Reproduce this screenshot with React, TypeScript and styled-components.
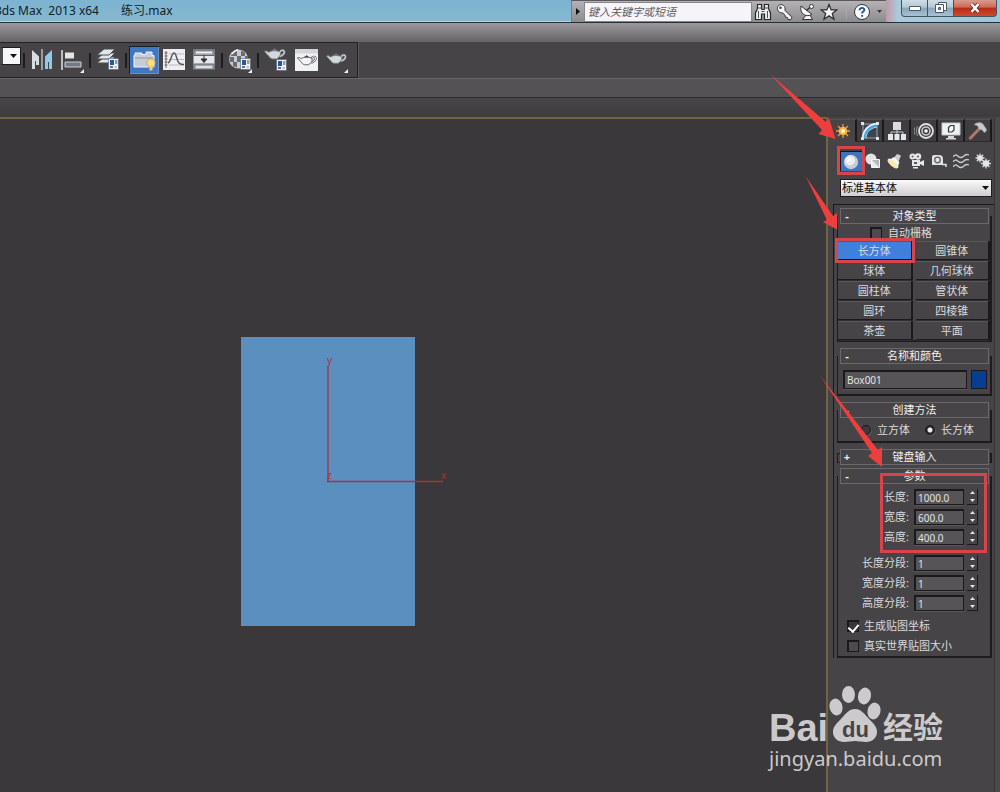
import React, { useState } from "react";
import styled, { createGlobalStyle, css } from "styled-components";

const GlobalStyle = createGlobalStyle`
  * { box-sizing: border-box; }
  html, body { margin: 0; background: #464446; }
  body {
    font-family: "Noto Sans", "Noto Sans CJK SC", sans-serif;
    font-size: 11px;
    line-height: 14px;
    color: #dcdadc;
  }
  button, input, select { font: inherit; color: inherit; margin: 0; padding: 0; border: 0; }
  svg { display: block; flex: none; }
`;

const Page = styled.div`
  display: flex;
  flex-direction: column;
  min-height: 100vh;
  overflow: hidden;
`;

/* ---------- title bar ---------- */

const TitleBar = styled.header`
  display: flex;
  height: 23px;
  background: linear-gradient(#7db3d1, #86b9cf);
  border-bottom: 1px solid #22303a;
  box-shadow: inset 0 -1px 0 #b5d5e2;
`;

const Title = styled.h1`
  flex: 1;
  display: flex;
  gap: 22px;
  margin: 0 0 0 -5px;
  font-size: 12px;
  line-height: 22px;
  font-weight: 400;
  color: #10202a;
  white-space: pre;
`;

const InfoCenter = styled.div`
  display: flex;
  align-items: center;
  height: 22px;
  background: linear-gradient(#b4b2b4, #8d8b8e);
  border-top: 1px solid #5b595b;
  border-left: 1px solid #6d7f8a;
`;

const SearchBox = styled.input`
  width: 168px;
  height: 20px;
  padding-left: 3px;
  background: #f6f4f8;
  border: 1px solid #88868a;
  font-style: italic;
  color: #333;
  &::placeholder { color: #5d5b5f; opacity: 1; }
`;

const InfoButton = styled.button<{ $w?: number }>`
  display: grid;
  place-items: center;
  width: ${(p) => p.$w ?? 22}px;
  height: 20px;
  background: none;
`;

const InfoDivider = styled.span`
  width: 1px;
  height: 14px;
  margin: 0 4px 0 6px;
  background: #aaa8ab;
`;

const WindowButtons = styled.div`
  display: flex;
  height: 22px;
  padding: 0 3px 0 15px;
  background: linear-gradient(90deg, #c39aa6 0, #a9cbdc 12px, #9cc6da 100%);
`;

const WindowButton = styled.button<{ $close?: boolean }>`
  display: grid;
  place-items: center;
  width: ${(p) => (p.$close ? 44 : 27)}px;
  height: 17px;
  border: 1px solid #43535f;
  border-top: 0;
  margin-right: ${(p) => (p.$close ? 0 : -1)}px;
  background: ${(p) =>
    p.$close
      ? "linear-gradient(#d99a8e 0, #cf6a58 45%, #b82a16 50%, #cf4a30 100%)"
      : "linear-gradient(#cfdde6 0, #b4c8d6 45%, #8ba6ba 50%, #a6c2d2 100%)"};
  &:first-child { border-bottom-left-radius: 4px; }
  &:last-child { border-bottom-right-radius: 4px; }
`;

/* ---------- main toolbar ---------- */

const MenuStrip = styled.div`
  height: 19px;
  background: linear-gradient(#9b999c, #656366);
`;

const ToolBar = styled.div`
  display: flex;
  height: 36px;
  background: #464446;
`;

const ToolGroup = styled.div`
  display: flex;
  align-items: center;
  padding-right: 6px;
  border: 1px solid #232123;
  border-left: 0;
  box-shadow: 1px 0 0 #59575a;
`;

const ComboEnd = styled.button`
  align-self: flex-start;
  display: flex;
  align-items: center;
  justify-content: flex-end;
  width: 21px;
  height: 18px;
  margin-top: 4px;
  padding-right: 3px;
  border: 1px solid #1d1b1d;
  border-left: 3px solid #4c4a4d;
  background: #f6f5f7;
`;

const ToolDivider = styled.span`
  width: 2px;
  height: 15px;
  margin: 0 2px;
  background: #1d1b1d;
`;

const ToolButton = styled.button<{ $active?: boolean }>`
  position: relative;
  display: grid;
  place-items: center;
  width: 30px;
  height: 28px;
  background: ${(p) => (p.$active ? "#3f77c2" : "none")};
  ${(p) => p.$active && css`box-shadow: inset 1px 1px 0 #16202c, inset -1px -1px 0 #6c92c4;`}
`;

const FlyoutMark = styled.span`
  position: absolute;
  right: 3px;
  bottom: 1px;
  border: 2px solid transparent;
  border-right-color: #f2f0f2;
  border-bottom-color: #f2f0f2;
`;

const RibbonStrip = styled.div`
  height: 19px;
  border-top: 1px solid #69676a;
  background: #545255;
`;

const DockStrip = styled.div`
  height: 20px;
  border-top: 1px solid #2c2a2c;
  background: linear-gradient(#484648, #3d3b3e);
`;

/* ---------- workspace ---------- */

const Workspace = styled.main`
  flex: 1;
  display: grid;
  grid-template-columns: minmax(0, 1fr) 172px;
`;

const Viewport = styled.section`
  position: relative;
  min-height: 560px;
  background: #3a383a;
  border: 2px solid #706541;
  border-left: 0;
  border-bottom: 0;
`;

const Scene = styled.svg`
  position: absolute;
  left: 240px;
  top: 217px;
`;

const AxisText = styled.text`
  font-size: 10px;
  fill: #a8323f;
`;

const Panel = styled.aside`
  position: relative;
  padding: 2px 7px 100px 2px;
  background: linear-gradient(90deg, #464446 166px, #363436 166px, #363436 167px, #4b494c 167px);
`;

const TabRow = styled.nav`
  display: flex;
  height: 23px;
`;

const PanelTab = styled.button<{ $active?: boolean }>`
  display: grid;
  place-items: center;
  width: 27px;
  border-right: 2px solid #1b191b;
  border-top: 1px solid #545255;
  border-bottom: 1px solid ${(p) => (p.$active ? "#464446" : "#2b292b")};
  background: ${(p) => (p.$active ? "#464446" : "#3f3d3f")};
`;

const CategoryRow = styled.div`
  display: flex;
  margin: 9px 0 8px 10px;
`;

const CategoryButton = styled.button<{ $active?: boolean }>`
  display: grid;
  place-items: center;
  flex: none;
  width: 22px;
  height: 20px;
  background: ${(p) => (p.$active ? "#3e73bf" : "none")};
  ${(p) => p.$active && css`box-shadow: inset 1px 1px 0 #15151b;`}
`;

const SelectWrap = styled.label`
  position: relative;
  display: block;
  width: 152px;
  margin-left: 10px;
  & > svg { position: absolute; right: 3px; top: 7px; pointer-events: none; }
`;

const KindSelect = styled.select`
  display: block;
  appearance: none;
  width: 100%;
  height: 18px;
  padding-left: 1px;
  border: 1px solid #1d1b1d;
  background: linear-gradient(#fafafa, #cfcdd0);
  color: #0d0b0d;
`;

const Rollouts = styled.div`
  display: flex;
  flex-direction: column;
  gap: 6px;
  width: 161px;
  margin: 7px 0 0 3px;
  padding: 3px 3px 0 3px;
  border-top: 1px solid #1b191b;
  border-left: 1px solid #1b191b;
`;

const RolloutBox = styled.section<{ $tight?: boolean }>`
  margin-bottom: ${(p) => (p.$tight ? -4 : 0)}px;
`;

const RolloutHeader = styled.button`
  position: relative;
  display: grid;
  grid-template-columns: 12px 1fr 12px;
  align-items: center;
  width: 149px;
  height: 16px;
  margin-left: 3px;
  border: 1px solid #6b696c;
  background: #464446;
  color: #f0eef0;
  & > b { line-height: 12px; }
`;

const RolloutBody = styled.div<{ $pad: string; $closed?: boolean }>`
  width: 155px;
  margin-top: ${(p) => (p.$closed ? -12 : -8)}px;
  margin-bottom: ${(p) => (p.$closed ? 3 : 0)}px;
  padding: ${(p) => p.$pad};
  border: 2px solid #1d1b1d;
  border-left-width: 1px;
  border-top-width: ${(p) => (p.$closed ? 1 : 0)}px;
  border-bottom-width: ${(p) => (p.$closed ? 1 : 2)}px;
`;

const CheckLabel = styled.label<{ $center?: boolean }>`
  display: flex;
  align-items: center;
  gap: 5px;
  height: 20px;
  ${(p) => p.$center && css`height: 16px; margin-left: 32px; gap: 6px;`}
`;

const CheckIndent = styled.div`
  padding-left: 9px;
`;

const Check = styled.input.attrs({ type: "checkbox" })`
  appearance: none;
  display: grid;
  place-items: center;
  width: 12px;
  height: 12px;
  border: 1px solid #1b191b;
  border-top-width: 2px;
  border-left-width: 2px;
  background: #4d4b4e;
  &:checked { background: #38363a; }
  &:checked::after {
    content: "";
    width: 5px;
    height: 8px;
    margin-bottom: 2px;
    border: solid #fff;
    border-width: 0 2px 2px 0;
    transform: rotate(40deg);
  }
`;

const ButtonGrid = styled.div`
  display: grid;
  grid-template-columns: 1fr 1fr;
  gap: 1px 3px;
`;

const ObjectButton = styled.button<{ $active?: boolean }>`
  height: 19px;
  line-height: 17px;
  border: solid #1b191b;
  border-width: 0 2px 1px 0;
  box-shadow: inset 0 1px 0 #5a585b, 0 1px 0 #302e30;
  background: ${(p) => (p.$active ? "#3f80dc" : "#464446")};
`;

const NameRow = styled.div`
  display: flex;
  gap: 4px;
`;

const Field = styled.input<{ $w: number }>`
  width: ${(p) => p.$w}px;
  height: ${(p) => (p.$w > 60 ? 19 : 16)}px;
  padding: 0 2px;
  border: solid #1b191b;
  border-width: 2px 1px 1px 2px;
  box-shadow: 0 1px 0 #5a585b;
  background: #565457;
  font-size: 10px;
  line-height: 12px;
  color: #e4e2e4;
`;

const Swatch = styled.button`
  width: 17px;
  height: 19px;
  border: 1px solid #1b191b;
  background: #063f92;
`;

const RadioRow = styled.div`
  display: flex;
  gap: 15px;
`;

const RadioLabel = styled.label`
  display: flex;
  align-items: center;
  gap: 6px;
`;

const Radio = styled.input.attrs({ type: "radio" })`
  appearance: none;
  width: 10px;
  height: 10px;
  border: 1px solid #1b191b;
  border-radius: 50%;
  background: #3c3a3d;
  box-shadow: 1px 1px 0 #5a585b;
  &:checked { background: radial-gradient(circle, #efedf0 2px, #2b292c 3px); }
`;

const SpinList = styled.div`
  display: grid;
  gap: 4px;
  margin-bottom: 10px;
  & + & { margin-bottom: 5px; }
`;

const SpinRow = styled.div`
  display: flex;
  align-items: center;
  justify-content: flex-end;
  height: 16px;
  gap: 3px;
  padding-right: 12px;
  & > label { padding-right: 2px; }
`;

const Spinner = styled.span`
  display: grid;
  width: 11px;
  height: 16px;
  border: solid #1b191b;
  border-width: 0 1px 1px 0;
  & > button { display: grid; place-items: center; background: none; }
`;

/* ---------- overlays ---------- */

const Annotations = styled.svg`
  position: absolute;
  left: -59px;
  top: -44px;
  pointer-events: none;
`;

const Watermark = styled.div`
  position: absolute;
  right: 53px;
  bottom: 22px;
  color: #d5d3d5;
  opacity: 0.94;
  pointer-events: none;
`;

const WatermarkUrl = styled.div`
  font-family: "Noto Sans", sans-serif;
  font-size: 20px;
  line-height: 22px;
  white-space: nowrap;
`;

const Logo = styled.svg`
  overflow: visible;
`;

const LogoText = styled.text<{ $size: number; $dark?: boolean }>`
  font-family: "Liberation Sans", "Noto Sans CJK SC", sans-serif;
  font-weight: 700;
  font-size: ${(p) => p.$size}px;
  fill: ${(p) => (p.$dark ? "#464446" : "#d5d3d5")};
`;

/* ---------- icons ---------- */

type DrawProps = { w?: number; h?: number; children: React.ReactNode };
const Draw = ({ w = 22, h = 22, children }: DrawProps) => (
  <svg width={w} height={h} viewBox={`0 0 ${w} ${h}`} fill="none" aria-hidden="true">
    {children}
  </svg>
);

const Caret = ({ fill = "#111" }: { fill?: string }) => (
  <Draw w={7} h={4}><path d="M0 0h7L3.5 4z" fill={fill} /></Draw>
);

const DialogBadge = ({ x, y }: { x: number; y: number }) => (
  <g transform={`translate(${x} ${y})`}>
    <path d="M0 0h10v11H0z" fill="#eef2f6" stroke="#55606c" strokeWidth=".6" />
    <path d="M1.500 1.500h4v5h-4z" fill="#1f5aa4" />
    <path d="M6.500 2.500h2.500M6.500 4.500h2.500" stroke="#445" />
    <path d="M1.500 8.500h3" stroke="#2a3a55" strokeWidth="1.400" />
    <path d="M6 8.500h2.500" stroke="#8a94a0" />
  </g>
);

const teapotPath =
  "M5 8c1.500-2.500 11-2.500 12.500 0 .3 1.500-.2 3-1.200 4.200-.8 1.200-1.800 2-2.800 2.600H8.500C6.500 14 5.500 12.800 5 11.500 3.500 11 2.500 8.500.5 6.800c1.800-.8 3.600-.2 4.500 1.200z";

const Teapot = ({ x = 0, y = 0, s = 1, fill = "#d3d8dd", line = "#777c82" }) => (
  <g transform={`translate(${x} ${y}) scale(${s})`}>
    <path d="M17 7.500c1-2.500 4.800-2.700 4.600.3-.2 2.300-2.600 3.700-5 4.500" stroke={line} strokeWidth="2.600" />
    <path d="M17 7.500c1-2.500 4.800-2.700 4.600.3-.2 2.300-2.600 3.700-5 4.500" stroke={fill} strokeWidth="1.200" />
    <path d={teapotPath} fill={fill} stroke={line} />
    <path d="M9.300 6c0-1.200 3.800-1.200 3.800 0M10.500 4.500h1.300" stroke={line} strokeWidth="1.500" />
  </g>
);

const MirrorIcon = () => (
  <Draw>
    <path d="M1 1l7 6.500V16l-3 0v-4l-1 0v8H1z" fill="#d7dde2" />
    <path d="M11 0v21" stroke="#e6f2f8" />
    <path d="M21 1l-7 6.500V20h3v-7h1v7h3z" fill="#8ecbe8" />
  </Draw>
);
const AlignIcon = () => (
  <Draw>
    <path d="M1 1v20" stroke="#e4e4ea" strokeWidth="1.500" />
    <path d="M4 3.500h9v6H4z" fill="#e2e4e8" />
    <path d="M4 13h16v5H4z" fill="#747986" stroke="#cbd0d8" />
  </Draw>
);
const LayersIcon = () => (
  <Draw>
    {[11, 7, 3].map((y) => (
      <path key={y} d={`M7 ${y - 3}h11l-6 6H0z`} fill="#e1e4e8" stroke="#4b4d51" />
    ))}
    <DialogBadge x={11.5} y={9.5} />
  </Draw>
);
const RibbonIcon = () => (
  <Draw w={24}>
    <path d="M2 6.500h1V4h7v1.500h4V3h6v3.500h2V18H2z" fill="#c7cdd6" stroke="#f1f3f6" />
    <path d="M3 9h18" stroke="#8b96a6" />
    <circle cx="19" cy="14" r="4.200" fill="#ffdc80" stroke="#b88a3a" strokeWidth=".6" />
    <path d="M17.500 18h3v3.500h-3z" fill="#eecb80" />
  </Draw>
);
const CurveIcon = () => (
  <Draw>
    <path d="M0 0h22v21H0z" fill="#eeeef2" />
    <path d="M6 5h15M6 10.500h15M6 16h15" stroke="#b7b7bf" />
    <path d="M3 2v17M1.500 4h3M1.500 7h3M1.500 10h3M1.500 13h3M1.500 16h3" stroke="#4a4a50" strokeWidth=".8" />
    <path d="M5 14C8 13 8.500 4 11 4s2.500 7 4.500 9.500 4 2 5.500 2" stroke="#55565c" strokeWidth="1.400" />
  </Draw>
);
const SchematicIcon = () => (
  <Draw>
    <path d="M.5.5h21v20H.5z" fill="#e6e8ec" />
    <path d="M1 1h20v5.500H1zM1 15h20v5.500H1z" fill="#a0a4aa" stroke="#62656b" />
    <path d="M3 3.500h16M3 18h16" stroke="#f5f5f5" strokeWidth="1.500" />
    <path d="M11 6v6M8 10l3 3.500 3-3.500z" stroke="#333" fill="#333" />
  </Draw>
);
const MaterialIcon = () => (
  <Draw w={24}>
    <circle cx="10.500" cy="10" r="9.500" fill="#c9cdd2" />
    <path d="M5 2h4v5H3zM13 1.500l4 2V7h-4zM1.500 8H6v5H2zM9 7h4v6H9zM17 7h3v5h-3zM5 13h4v5.500L5 17zM13 13h3v5h-3z" fill="#686c72" />
    <path d="M4 5q3-4 6-4" stroke="#fff" strokeWidth="1.500" />
    <DialogBadge x={12.500} y={9.5} />
  </Draw>
);
const RenderSetupIcon = () => (
  <Draw w={24} h={24}><Teapot y={-3} s={0.94} /><DialogBadge x={12.500} y={11.500} /></Draw>
);
const RenderFrameIcon = () => (
  <Draw w={23}>
    <path d="M0 0h23v22H0z" fill="#f1f1f4" />
    <path d="M0 0h23v4.500H0z" fill="#d3d5da" />
    <Teapot x={2} y={3} s={0.86} fill="#f2f4f6" line="#4b4d52" />
  </Draw>
);
const RenderIcon = () => <Draw w={24}><Teapot x={2} y={1} s={0.9} /></Draw>;

const BinocularsIcon = () => (
  <Draw w={18} h={18}>
    <path d="M3.500 1.500h4v4l.5 1h2l.5-1v-4h4v4l2 4.500v6.500h-6V11h-3v5.500h-6V10l2-4.500z" fill="#eceef0" stroke="#26282c" strokeWidth="1.200" />
    <path d="M4.500 8v7M13.500 8v7M3.500 5h4M10.500 5h4M7.500 8.500h3" stroke="#4f5359" />
  </Draw>
);
const KeyIcon = () => (
  <Draw w={18} h={18}>
    <path d="M8.800 7.300l7.200 6.900-1.300 2.600-2.700-.3-.6-2-2-.4-.4-1.900-2.300-2.400C4 10.500 1 8 1.500 4.500 2 2 5 .8 7.300 2.300 9.200 3.700 9.500 5.500 8.800 7.300z" fill="#f5f5f7" stroke="#333539" />
    <circle cx="4.500" cy="4.700" r="1.300" fill="#44464a" />
  </Draw>
);
const DishIcon = () => (
  <Draw w={18} h={18}>
    <path d="M9 11l-4.500 5.500h10L12 12z" fill="#f5f5f7" stroke="#333539" />
    <path d="M3 3c-1.500 7 4 12 11 8.500z" fill="#f5f5f7" stroke="#333539" />
    <path d="M8.500 7.500l4-3.500" stroke="#333539" strokeWidth="1.500" />
    <circle cx="13.500" cy="3.500" r="2" fill="#fff" stroke="#333539" />
  </Draw>
);
const StarIcon = () => (
  <Draw w={18} h={18}>
    <path d="M9 1.500l2.100 5.400H16.700l-4.400 3.500 1.700 5.800L9 12.900l-5 3.300 1.700-5.800L1.300 6.900h5.600z" fill="#f5f5f7" stroke="#2f3135" strokeWidth="1.300" />
  </Draw>
);
const HelpIcon = () => (
  <Draw w={18} h={18}>
    <circle cx="9" cy="9" r="7.500" fill="#f7f9fb" stroke="#34373c" />
    <path d="M6.600 7.300c0-3.300 5-3 4.700-.2-.2 1.500-2.200 1.600-2.200 3.300M9.100 12v1.800" stroke="#27548f" strokeWidth="1.900" />
  </Draw>
);

const CreateIcon = () => (
  <Draw w={16} h={16}>
    <path d="M8 1v14M1 8h14M3 3l10 10M13 3L3 13" stroke="#f09a35" strokeWidth="1.300" />
    <circle cx="8" cy="8" r="4.300" fill="#f9b040" />
    <circle cx="8" cy="8" r="2.200" fill="#fff3c0" />
  </Draw>
);
const ModifyIcon = () => (
  <Draw w={18} h={18}>
    <path d="M2 2h14v14H2z" fill="#3a4550" stroke="#9ea6ae" />
    <path d="M3 16C4 8 8 4 16 3" stroke="#e5f5fd" strokeWidth="4.500" />
    <path d="M3.500 16C4.500 9 8 4.500 16 3.500" stroke="#45a5dc" strokeWidth="2.500" />
    <path d="M0 0h3v3H0zM15 0h3v3h-3zM0 15h3v3H0zM15 15h3v3h-3z" fill="#dfe3e6" />
  </Draw>
);
const HierarchyIcon = () => (
  <Draw w={18} h={18}>
    <path d="M5 0h8v8H5z" fill="#d9dde1" />
    <path d="M9 7v5M3 13v-3h12v3" stroke="#c8ccd0" />
    <path d="M0 12h5v6H0zM6.500 12h5v6h-5zM13 12h5v6h-5z" fill="#e4e7ea" />
  </Draw>
);
const MotionIcon = () => (
  <Draw w={20} h={18}>
    <circle cx="12" cy="9" r="7" stroke="#dfe2e5" strokeWidth="1.800" />
    <circle cx="12" cy="9" r="4" stroke="#c3c8cd" strokeWidth="1.600" />
    <circle cx="12" cy="9" r="1.800" fill="#fff" />
    <path d="M3.500 4q-2.500 5 0 10M.8 5.500q-1.500 3.500 0 7" stroke="#8b9096" />
  </Draw>
);
const DisplayIcon = () => (
  <Draw w={20} h={18}>
    <path d="M1 1h18v12H1z" fill="#f0f2f4" stroke="#c4c8cc" />
    <path d="M7.500 5.500l2-2h3.500v4.500l-2 2H7.500z" stroke="#33363a" strokeWidth="1.200" />
    <path d="M7 14h6v2h2v1.500H5V16h2z" fill="#d5d8db" />
  </Draw>
);
const UtilitiesIcon = () => (
  <Draw w={20} h={18}>
    <path d="M12 6L1.500 17" stroke="#b0756c" strokeWidth="3" />
    <path d="M6 2.500c3-2.500 7-2.500 9-.5l4 6-2.500 3L14 8l-3-.5L9.500 4z" fill="#c6cace" stroke="#777c82" strokeWidth=".6" />
  </Draw>
);

const SphereIcon = () => (
  <Draw w={18} h={18}>
    <circle cx="9" cy="10" r="7.200" fill="#c8ccd1" />
    <circle cx="8" cy="8.500" r="5" fill="#eceef0" />
    <circle cx="7" cy="7.500" r="2" fill="#fff" />
  </Draw>
);
const ShapesIcon = () => (
  <Draw w={16} h={16}>
    <circle cx="6" cy="6" r="5.500" fill="#e0e2e5" />
    <path d="M6.500 6.500h8v8h-8z" fill="#b5b9be" stroke="#f4f5f6" />
    <path d="M7 14V7l7 7z" fill="#e9ebed" />
  </Draw>
);
const LightIcon = () => (
  <Draw w={16} h={16}>
    <path d="M14 2.500L10 1 6 6l5 4z" fill="#cdd0d4" />
    <path d="M7 4L2 7l8 8 2.500-5.500z" fill="#f4f5f6" />
    <ellipse cx="6" cy="10.500" rx="6" ry="2.300" transform="rotate(40 6 10.500)" fill="#ffe9a0" stroke="#f4f2e8" />
  </Draw>
);
const CameraIcon = () => (
  <Draw w={16} h={16}>
    <circle cx="3.500" cy="3.500" r="3" fill="#e5e8ea" /><circle cx="9" cy="3.500" r="3.200" fill="#e5e8ea" />
    <circle cx="3.500" cy="3.500" r="1" fill="#555" /><circle cx="9" cy="3.500" r="1" fill="#555" />
    <path d="M3 7h8v6H3zM11 9l4-2v6l-4-2zM4 14h5v1.500H4z" fill="#e5e8ea" />
    <path d="M5 9h3v2H5z" fill="#55585c" />
  </Draw>
);
const HelperIcon = () => (
  <Draw w={16} h={16}>
    <path d="M1 4q0-2 2-2h5q4 0 4 4v6H1z" fill="#e0e3e6" />
    <circle cx="6.500" cy="7" r="2.800" stroke="#5a5e63" strokeWidth="1.300" />
    <path d="M11 11.500h4V14" stroke="#e0e3e6" strokeWidth="1.500" />
  </Draw>
);
const WavesIcon = () => (
  <Draw w={16} h={16}>
    {[3, 8, 13].map((y) => (
      <path key={y} d={`M0 ${y + 1}q2-3.500 5-.8t5.500 0T16 ${y - 1}`} stroke="#c4c9ce" strokeWidth="1.300" />
    ))}
  </Draw>
);
const SystemsIcon = () => (
  <Draw w={16} h={16}>
    <path d="M5 .5v9M.5 5h9M1.800 1.800l6.400 6.400M8.200 1.800L1.800 8.200" stroke="#d3d6d9" strokeWidth="1.300" />
    <circle cx="5" cy="5" r="2.800" fill="#e3e5e8" />
    <path d="M11 5.500v10M6 10.500h10M7.500 7l7 7M14.500 7l-7 7" stroke="#d3d6d9" strokeWidth="1.300" />
    <circle cx="11" cy="10.500" r="3.200" fill="#e3e5e8" />
  </Draw>
);

/* ---------- data ---------- */

type Tool = { label: string; icon: React.ReactNode; active?: boolean; flyout?: boolean };
const toolGroups: Tool[][] = [
  [{ label: "镜像", icon: <MirrorIcon /> }, { label: "对齐", icon: <AlignIcon />, flyout: true }],
  [{ label: "层管理器", icon: <LayersIcon /> }],
  [
    { label: "功能区", icon: <RibbonIcon />, active: true },
    { label: "曲线编辑器", icon: <CurveIcon /> },
    { label: "图解视图", icon: <SchematicIcon /> },
  ],
  [{ label: "材质编辑器", icon: <MaterialIcon />, flyout: true }],
  [
    { label: "渲染设置", icon: <RenderSetupIcon /> },
    { label: "渲染帧窗口", icon: <RenderFrameIcon /> },
    { label: "渲染", icon: <RenderIcon />, flyout: true },
  ],
];

const panelTabs: Tool[] = [
  { label: "创建", icon: <CreateIcon />, active: true },
  { label: "修改", icon: <ModifyIcon /> },
  { label: "层次", icon: <HierarchyIcon /> },
  { label: "运动", icon: <MotionIcon /> },
  { label: "显示", icon: <DisplayIcon /> },
  { label: "工具", icon: <UtilitiesIcon /> },
];

const categories: Tool[] = [
  { label: "几何体", icon: <SphereIcon />, active: true },
  { label: "图形", icon: <ShapesIcon /> },
  { label: "灯光", icon: <LightIcon /> },
  { label: "摄影机", icon: <CameraIcon /> },
  { label: "辅助对象", icon: <HelperIcon /> },
  { label: "空间扭曲", icon: <WavesIcon /> },
  { label: "系统", icon: <SystemsIcon /> },
];

const objectTypes = ["长方体", "圆锥体", "球体", "几何球体", "圆柱体", "管状体", "圆环", "四棱锥", "茶壶", "平面"];
const sizes = [["长度:", "1000.0"], ["宽度:", "600.0"], ["高度:", "400.0"]];
const segments = [["长度分段:", "1"], ["宽度分段:", "1"], ["高度分段:", "1"]];

/* ---------- parts ---------- */

type RolloutProps = { title: string; pad?: string; closed?: boolean; children?: React.ReactNode };
const Rollout = ({ title, pad = "4px 0", closed, children }: RolloutProps) => (
  <RolloutBox $tight={closed}>
    <RolloutHeader aria-expanded={!closed}><b>{closed ? "+" : "-"}</b>{title}</RolloutHeader>
    <RolloutBody $pad={pad} $closed={closed}>{children}</RolloutBody>
  </RolloutBox>
);

const SpinField = ({ label, value }: { label: string; value: string }) => {
  const [text, setText] = useState(value);
  return (
    <SpinRow>
      <label htmlFor={label}>{label}</label>
      <Field id={label} $w={50} value={text} onChange={(e) => setText(e.target.value)} />
      <Spinner>
        <button aria-label={`${label} +`}><Draw w={5} h={3}><path d="M0 3h5L2.500 0z" fill="#e6e4e6" /></Draw></button>
        <button aria-label={`${label} -`}><Draw w={5} h={3}><path d="M0 0h5L2.500 3z" fill="#e6e4e6" /></Draw></button>
      </Spinner>
    </SpinRow>
  );
};

const CheckRow = ({ label, checked }: { label: string; checked?: boolean }) => (
  <CheckIndent>
    <CheckLabel><Check defaultChecked={checked} />{label}</CheckLabel>
  </CheckIndent>
);

export default function App() {
  return (
    <Page>
      <GlobalStyle />
      <TitleBar>
        <Title><span>3ds Max  2013 x64</span><span>练习.max</span></Title>
        <InfoCenter>
          <InfoButton $w={12} aria-label="展开"><Draw w={4} h={7}><path d="M0 0v7l4-3.500z" fill="#111" /></Draw></InfoButton>
          <SearchBox aria-label="搜索" placeholder="键入关键字或短语" />
          <InfoButton aria-label="搜索"><BinocularsIcon /></InfoButton>
          <InfoButton aria-label="速博应用"><KeyIcon /></InfoButton>
          <InfoButton aria-label="通讯中心"><DishIcon /></InfoButton>
          <InfoButton aria-label="收藏夹"><StarIcon /></InfoButton>
          <InfoDivider />
          <InfoButton aria-label="帮助"><HelpIcon /></InfoButton>
          <InfoButton $w={13} aria-label="帮助菜单"><Draw w={5} h={3}><path d="M0 0h5L2.500 3z" fill="#3a383a" /></Draw></InfoButton>
        </InfoCenter>
        <WindowButtons>
          <WindowButton aria-label="最小化"><Draw w={12} h={5}><path d="M.5.5h11v4H.5z" fill="#fff" stroke="#4c5a66" /></Draw></WindowButton>
          <WindowButton aria-label="还原">
            <Draw w={12} h={12}>
              <path d="M3.500.5h8v8h-8z" fill="#fff" stroke="#4c5a66" />
              <path d="M.5 2.500h8v8h-8z" fill="#fff" stroke="#4c5a66" />
              <path d="M3.500 5.500h2v2h-2z" fill="#7893a6" stroke="#4c5a66" />
            </Draw>
          </WindowButton>
          <WindowButton $close aria-label="关闭">
            <Draw w={12} h={10}>
              <path d="M2.500 1l7 8M9.500 1l-7 8" stroke="#6a2a22" strokeWidth="4" />
              <path d="M2.500 1l7 8M9.500 1l-7 8" stroke="#fff" strokeWidth="2.500" />
            </Draw>
          </WindowButton>
        </WindowButtons>
      </TitleBar>
      <MenuStrip />
      <ToolBar>
        <ToolGroup>
          <ComboEnd aria-label="命名选择集"><Caret /></ComboEnd>
          {toolGroups.map((group, i) => (
            <React.Fragment key={i}>
              <ToolDivider />
              {group.map((t) => (
                <ToolButton key={t.label} $active={t.active} aria-label={t.label}>
                  {t.icon}
                  {t.flyout && <FlyoutMark />}
                </ToolButton>
              ))}
            </React.Fragment>
          ))}
        </ToolGroup>
      </ToolBar>
      <RibbonStrip />
      <DockStrip />
      <Workspace>
        <Viewport>
          <Scene width="210" height="292" viewBox="240 336 210 292">
            <path d="M241 337h174v289H241z" fill="#5a8fc0" />
            <path d="M328 366v115.500M327 481.500h116" stroke="#a8323f" strokeWidth="1.300" />
            <AxisText x="327" y="364">y</AxisText>
            <AxisText x="327" y="479">z</AxisText>
            <AxisText x="441" y="479">x</AxisText>
          </Scene>
        </Viewport>
        <Panel>
          <TabRow>
            {panelTabs.map((t) => (
              <PanelTab key={t.label} $active={t.active} aria-label={t.label}>{t.icon}</PanelTab>
            ))}
          </TabRow>
          <CategoryRow>
            {categories.map((t) => (
              <CategoryButton key={t.label} $active={t.active} aria-label={t.label}>{t.icon}</CategoryButton>
            ))}
          </CategoryRow>
          <SelectWrap>
            <KindSelect aria-label="对象类别"><option>标准基本体</option></KindSelect>
            <Caret />
          </SelectWrap>
          <Rollouts>
            <Rollout title="对象类型" pad="9px 0 0">
              <CheckLabel $center><Check />自动栅格</CheckLabel>
              <ButtonGrid>
                {objectTypes.map((name, i) => (
                  <ObjectButton key={name} $active={i === 0}>{name}</ObjectButton>
                ))}
              </ButtonGrid>
            </Rollout>
            <Rollout title="名称和颜色" pad="14px 3px 5px 5px">
              <NameRow>
                <Field aria-label="名称" $w={124} defaultValue="Box001" />
                <Swatch aria-label="颜色" />
              </NameRow>
            </Rollout>
            <Rollout title="创建方法" pad="13px 0 4px 23px">
              <RadioRow>
                <RadioLabel><Radio name="method" />立方体</RadioLabel>
                <RadioLabel><Radio name="method" defaultChecked />长方体</RadioLabel>
              </RadioRow>
            </Rollout>
            <Rollout title="键盘输入" closed />
            <Rollout title="参数" pad="13px 0 0">
              <SpinList>{sizes.map(([l, v]) => <SpinField key={l} label={l} value={v} />)}</SpinList>
              <SpinList>{segments.map(([l, v]) => <SpinField key={l} label={l} value={v} />)}</SpinList>
              <CheckRow label="生成贴图坐标" checked />
              <CheckRow label="真实世界贴图大小" />
            </Rollout>
          </Rollouts>
          <Annotations width="222" height="490" viewBox="769 73 222 490">
            <g fill="#ee3e3e">
              <path d="M770 74L826 122l3-4 6.500 21-17-5 3.500-4z" />
              <path d="M805.500 176L833 216l4-3v16.500L823 222l4-2z" />
              <path d="M819.500 375L878 450l4-3v20l-14-11 4-3z" />
            </g>
            <g stroke="#d6454a" strokeWidth="3">
              <path d="M838.500 147.500h25v26h-25zM836.500 239.500h77v22h-77zM881.500 474.500h104v77h-104z" fill="none" />
            </g>
          </Annotations>
          <Watermark>
            <Logo width="178" height="64" viewBox="768 684 178 64">
              <LogoText $size={38} x="768" y="741">Bai</LogoText>
              <g fill="#d5d3d5">
                <ellipse cx="835" cy="707" rx="6.500" ry="8.500" transform="rotate(-12 835 707)" />
                <ellipse cx="847.500" cy="694.500" rx="6.500" ry="8.500" />
                <ellipse cx="863.500" cy="696" rx="6.500" ry="8.500" transform="rotate(12 863.500 696)" />
                <ellipse cx="873" cy="711" rx="6.500" ry="8.500" transform="rotate(12 873 711)" />
                <path d="M854 709c7 0 10 6 15 11 4 4 7 7 7 12 0 6-5 10-11 10-4 0-8-1-11-1s-7 1-11 1c-6 0-11-4-11-10 0-5 3-8 7-12 5-5 8-11 15-11z" />
              </g>
              <LogoText $size={22} $dark x="841" y="737">du</LogoText>
              <LogoText $size={30} x="882" y="738">经验</LogoText>
            </Logo>
            <WatermarkUrl>jingyan.baidu.com</WatermarkUrl>
          </Watermark>
        </Panel>
      </Workspace>
    </Page>
  );
}
